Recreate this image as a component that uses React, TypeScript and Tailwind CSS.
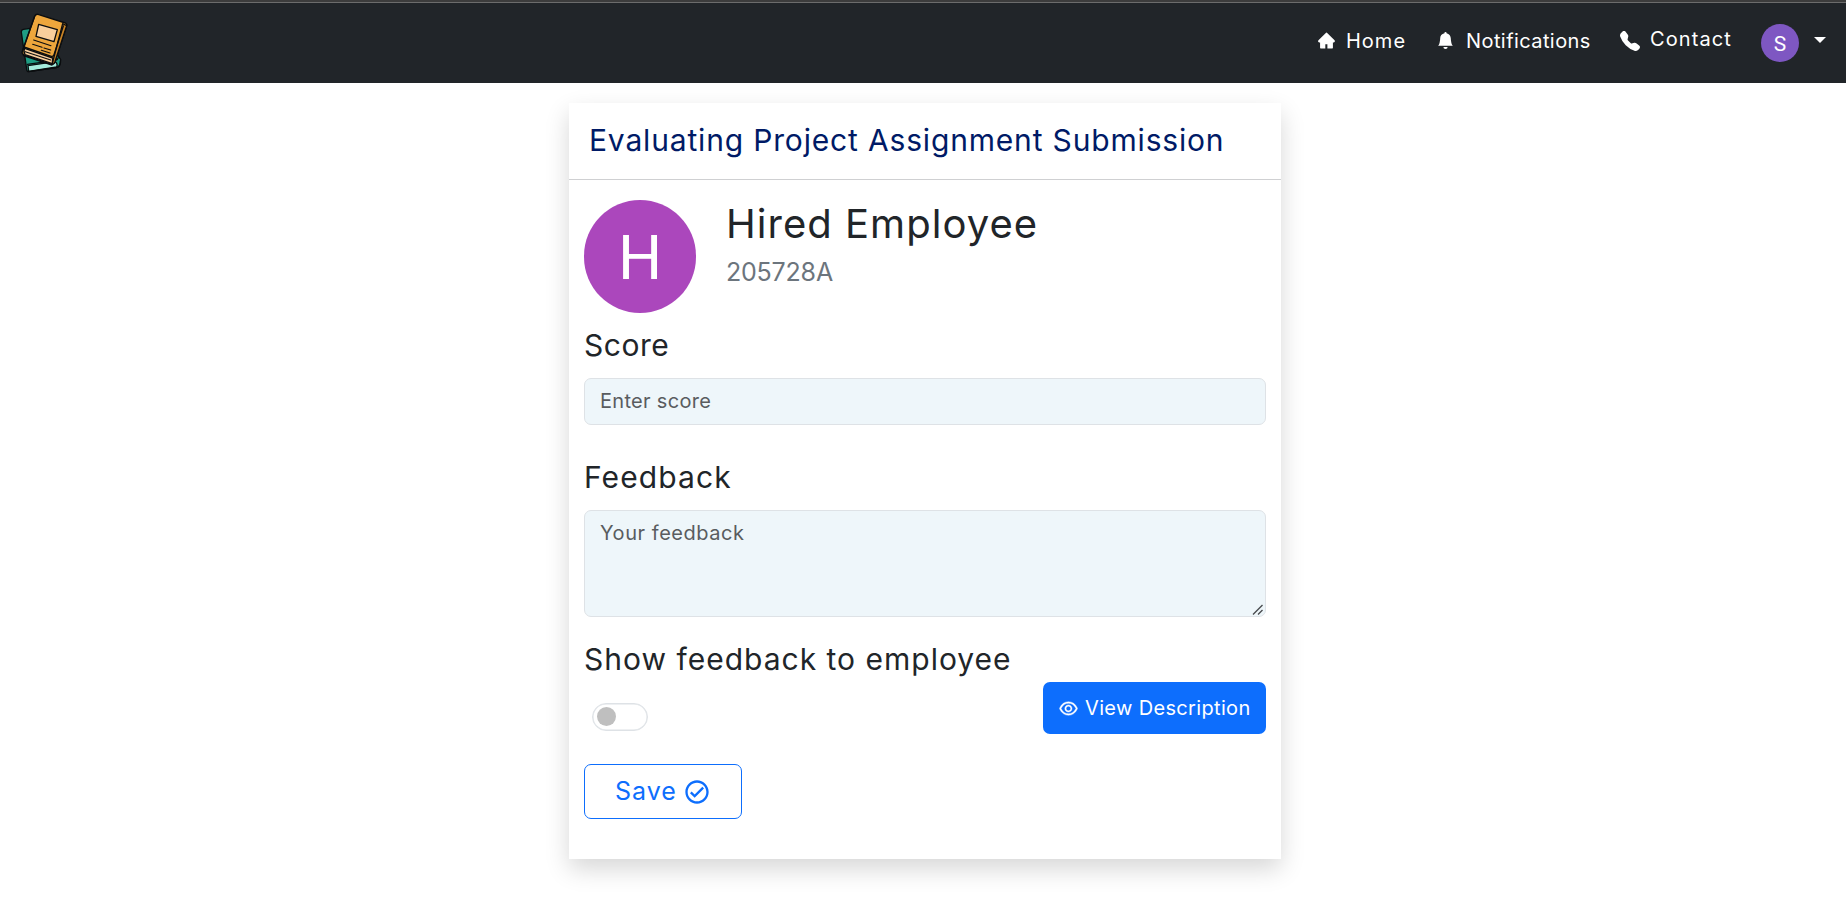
import { AiFillHome, AiOutlineEye } from 'react-icons/ai';
import { BsBellFill, BsTelephoneFill } from 'react-icons/bs';
import { MdOutlineCheckCircle } from 'react-icons/md';

function BooksLogo() {
  return (
    <svg viewBox="60 36 147 183" className="h-[61px] w-[49px]" strokeLinejoin="round" strokeLinecap="round">
      <g stroke="#0b0d0f" strokeWidth="4">
        <path d="M64 94q-1-7 6-9l50-7 62 98q0 22-12 24l-84 12q-6 0-6-8z" fill="#1f9d83" />
        <path d="M84 194l82-12q8 6 4 16l-84 13z" fill="#a5ecdc" />
        <path d="M82 190l84-12q8-2 9-8M84 212l84-12q14-4 13-20" fill="none" />
        <path d="M104 46q3-7 10-6l82 26q6 3 4 9l-34 106q-3 10-12 9l-82-28q-8-4-5-12z" fill="#eda63c" />
        <path d="M188 68l12 6-35 108q-3 8-9 8l4-14z" fill="#c98325" />
        <path d="M74 142l84 29-1 17-82-27q-6-10-1-19z" fill="#f9cf9c" />
        <path d="M104 46L72 138M68 150l4-12 82 28q6 1 8-5l28-86M70 164l86 28" fill="none" />
        <path d="M116 70l56 16-10 36-54-16z" fill="#f9cf9c" />
      </g>
      <g fill="none" stroke="#0b0d0f" strokeWidth="3.4">
        <path d="M101 117l52 17M98 130l28 9M132 141l20 6M124 148l26 8M76 152l76 25" />
      </g>
    </svg>
  );
}

function Navbar() {
  return (
    <header className="flex h-[83px] border-t-2 border-[#3c3c3c] bg-[#212529] text-xl/[30px] text-white">
      <div className="flex w-full items-start border-t border-[#6c6c6c] pr-5 pl-5">
        <a className="pt-[10px]"><BooksLogo /></a>
        <nav className="ml-auto flex items-start">
          <a className="mt-[23px] flex items-start">
            <AiFillHome className="mt-[5px] mr-[10px] size-[19px]" />
            <span className="w-[60px] tracking-[1px]">Home</span>
          </a>
          <a className="mt-[23px] ml-[31px] flex items-start">
            <BsBellFill className="mt-[6px] mr-[12px] size-[17px]" />
            <span className="w-[125px] tracking-[0.42px]">Notifications</span>
          </a>
          <a className="mt-[21px] ml-[29px] flex items-start">
            <BsTelephoneFill className="mt-[7px] mr-[10px] size-5" />
            <span className="w-[82px] tracking-[1.1px]">Contact</span>
          </a>
          <a className="mt-[21px] ml-[29px] flex items-start">
            <span className="flex size-[38px] items-center justify-center rounded-full bg-[#7e57c2] pt-px font-['Roboto'] text-[21px]">S</span>
            <svg viewBox="0 0 12 6" className="mt-[13px] ml-[15px] h-[6px] w-3 fill-white"><path d="M0 0h12L6 6z" /></svg>
          </a>
        </nav>
      </div>
    </header>
  );
}

export default function App() {
  return (
    <div className="min-h-[918px] bg-white font-['Inter',sans-serif] text-[#212529]">
      <Navbar />
      <main className="ml-[569px] mt-5 h-[756px] w-[712px] bg-white shadow-[0_10px_23px_rgba(0,0,0,0.16)]">
        <h4 className="flex h-[77px] items-start border-b border-[#cfd0d2] pt-[19px] pl-[20px] text-[30px]/[36px] tracking-[0.83px] whitespace-nowrap text-[#001a66]">
          Evaluating Project Assignment Submission
        </h4>
        <div className="flex flex-col px-[15px]">
          <div className="mt-5 flex h-[113px]">
            <div className="flex h-[113px] w-[112px] items-center justify-center rounded-full bg-[#ab47bc] pt-[2px] font-['Roboto'] text-[62px] text-white">H</div>
            <div className="pl-[30px]">
              <h2 className="text-[40px]/[48px] tracking-[1.03px]">Hired Employee</h2>
              <h5 className="mt-[9px] text-[25px]/[30px] tracking-[-0.2px] text-[#6c757d]">205728A</h5>
            </div>
          </div>
          <label className="mt-[14px] text-[30px]/[36px] tracking-[0.5px]">Score</label>
          <input
            placeholder="Enter score"
            className="mt-[15px] h-[47px] rounded-[7px] border border-[#dee2e6] bg-[#eef6fa] px-[15px] pb-px text-xl tracking-[0.3px] placeholder:text-[#595c5f]"
          />
          <label className="mt-[34px] text-[30px]/[36px] tracking-[1.1px]">Feedback</label>
          <div className="relative mt-[15px] h-[107px]">
            <textarea
              placeholder="Your feedback"
              className="block size-full resize-none rounded-[7px] border border-[#dee2e6] bg-[#eef6fa] px-[15px] py-[7px] text-xl/[30px] tracking-[0.55px] placeholder:text-[#595c5f]"
            />
            <svg viewBox="0 0 12 12" className="pointer-events-none absolute right-[2px] bottom-[1px] size-3" stroke="#4a4d50" strokeWidth="1.4">
              <path d="M1 10.5L10.5 1M6 10.5L10.5 6" />
            </svg>
          </div>
          <div className="mt-[24px] text-[30px]/[36px] tracking-[1px]">Show feedback to employee</div>
          <div className="mt-[5px] flex h-[52px] items-start justify-between">
            <button className="mt-[21px] ml-2 flex h-7 w-14 items-center rounded-full border border-[#dee2e6] px-[3.5px] pb-px shadow-[inset_0_0_0_0.5px_#dee2e6]">
              <span className="size-[19px] rounded-full bg-[#bfbfbf]" />
            </button>
            <button className="flex h-[52px] w-[223px] items-center rounded-[7px] bg-[#0d6efd] pl-[15px] text-xl/[30px] tracking-[0.34px] whitespace-nowrap text-white">
              <AiOutlineEye className="mt-px mr-[6px] size-[21px] shrink-0" strokeWidth={20} />
              View Description
            </button>
          </div>
          <button className="mt-[30px] flex h-[55px] w-[158px] items-center rounded-[7px] border border-[#0d6efd] pb-px pl-[30px] text-[25px]/[38px] tracking-[1px] text-[#0d6efd]">
            Save
            <MdOutlineCheckCircle className="mt-[2px] ml-[6px] size-7" />
          </button>
        </div>
      </main>
    </div>
  );
}
